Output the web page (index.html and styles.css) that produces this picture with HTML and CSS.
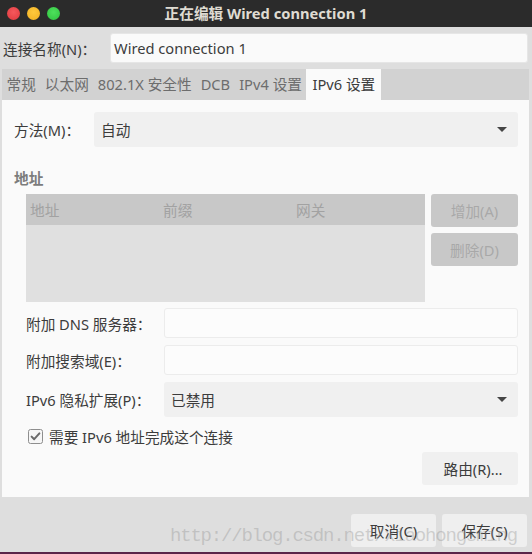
FILE: index.html
```html
<!DOCTYPE html>
<html lang="zh-CN">
<head>
<meta charset="utf-8">
<title>正在编辑 Wired connection 1</title>
<link rel="stylesheet" href="styles.css">
</head>
<body>
<div class="window">
  <div class="titlebar">
    <div class="lights">
      <span class="light red"></span>
      <span class="light yellow"></span>
      <span class="light green"></span>
    </div>
    <div class="title">正在编辑 Wired connection 1</div>
    <div></div>
  </div>

  <div class="name-row">
    <div class="name-label">连接名称(N)：</div>
    <div class="entry name-entry">Wired connection 1</div>
  </div>

  <div class="notebook">
    <div class="tabs">
      <div class="tab">常规</div>
      <div class="tab">以太网</div>
      <div class="tab">802.1X 安全性</div>
      <div class="tab">DCB</div>
      <div class="tab">IPv4 设置</div>
      <div class="tab active">IPv6 设置</div>
    </div>
    <div class="panel">
      <div class="method-row">
        <div class="method-label">方法(M)：</div>
        <div class="combo">
          <span>自动</span>
          <svg class="arrow" width="10" height="5" viewBox="0 0 10 5"><polygon points="0,0 10,0 5,5" fill="#454545"/></svg>
        </div>
      </div>

      <div class="section-title">地址</div>

      <div class="address">
        <div class="table">
          <div class="thead">
            <span>地址</span><span>前缀</span><span>网关</span>
          </div>
          <div class="tbody"></div>
        </div>
        <div class="side-buttons">
          <div class="btn disabled">增加(A)</div>
          <div class="btn disabled">删除(D)</div>
        </div>
      </div>

      <div class="form">
        <div class="form-label">附加 DNS 服务器：</div>
        <div class="entry field"></div>
        <div class="form-label">附加搜索域(E)：</div>
        <div class="entry field"></div>
        <div class="form-label">IPv6 隐私扩展(P)：</div>
        <div class="combo combo-small">
          <span>已禁用</span>
          <svg class="arrow" width="10" height="5" viewBox="0 0 10 5"><polygon points="0,0 10,0 5,5" fill="#454545"/></svg>
        </div>
      </div>

      <div class="check-row">
        <svg class="checkbox" width="15" height="15" viewBox="0 0 15 15">
          <rect x="0.5" y="0.5" width="14" height="14" rx="2" ry="2" fill="#f6f6f6" stroke="#8e8e8e"/>
          <path d="M3.6 7.6 L6.2 10.2 L11.4 4.4" fill="none" stroke="#6a6a6a" stroke-width="2" stroke-linecap="round" stroke-linejoin="round"/>
        </svg>
        <span>需要 IPv6 地址完成这个连接</span>
      </div>

      <div class="route-row">
        <div class="btn route">路由(R)...</div>
      </div>
    </div>
  </div>

  <div class="dialog-buttons">
    <div class="btn action">取消(C)</div>
    <div class="btn action">保存(S)</div>
  </div>
  <div class="bottom-line"></div>

  <div class="watermark">http://blog.csdn.net/xiaohongsming</div>
</div>
</body>
</html>
```

FILE: styles.css
```css
html, body {
  margin: 0;
  padding: 0;
}

body {
  width: 532px;
  height: 554px;
  overflow: hidden;
  background: #dedede;
  font-family: "Noto Sans", "Noto Sans CJK SC", sans-serif;
  font-size: 14.67px;
  color: #3c3c3c;
}

.window {
  position: relative;
  width: 532px;
  height: 554px;
  display: flex;
  flex-direction: column;
}

.titlebar {
  height: 27px;
  flex: none;
  background: #2b2b2b;
  display: grid;
  grid-template-columns: 1fr auto 1fr;
  align-items: center;
}

.lights {
  display: flex;
  gap: 7px;
  padding-left: 7px;
}

.light {
  width: 13px;
  height: 13px;
  border-radius: 50%;
  display: block;
}

.red { background: radial-gradient(circle at 50% 40%, #f5585c, #e0393e); }
.yellow { background: radial-gradient(circle at 50% 40%, #ffc93c, #f2b022); }
.green { background: radial-gradient(circle at 50% 40%, #4ee05c, #2fc43f); }

.title {
  color: #dfdbd2;
  font-weight: bold;
  font-size: 14.67px;
  line-height: 27px;
}

.name-row {
  display: flex;
  align-items: center;
  margin: 6px 4px 0 3px;
  height: 30px;
  flex: none;
}

.name-label {
  width: 107px;
  flex: none;
}

.entry {
  background: #fafafa;
  border-radius: 3px;
  box-sizing: border-box;
}

.name-entry {
  flex: 1;
  height: 30px;
  padding-left: 3px;
  border: 1px solid #e6e6e6;
  line-height: 28px;
}

.notebook {
  margin: 6px 3px 0 2px;
  flex: none;
}

.tabs {
  height: 31px;
  background: #d2d2d2;
  display: flex;
}

.tab {
  padding: 0 4.5px;
  line-height: 31px;
  color: #6d6d6d;
  white-space: nowrap;
}

.tab.active {
  background: #fafafa;
  color: #3c3c3c;
  padding: 0 6px;
}

.panel {
  background: #fafafa;
  height: 397px;
  box-sizing: border-box;
  padding: 12px 11px 0 12px;
}

.method-row {
  display: flex;
  align-items: center;
  height: 35px;
}

.method-label {
  width: 80px;
  flex: none;
}

.combo {
  flex: 1;
  height: 35px;
  background: #f0f0f0;
  border-radius: 3px;
  display: flex;
  align-items: center;
  justify-content: space-between;
  padding: 0 11px 0 7px;
  box-sizing: border-box;
}

.arrow {
  display: block;
}

.section-title {
  margin-top: 21px;
  line-height: 20px;
  font-weight: bold;
  color: #7c7c7c;
}

.address {
  margin-top: 6px;
  margin-left: 12px;
  display: flex;
  gap: 6px;
}

.table {
  width: 399px;
  height: 108px;
  background: #e0e0e0;
  display: flex;
  flex-direction: column;
}

.thead {
  height: 31px;
  background: #c8c8c8;
  display: grid;
  grid-template-columns: 133px 133px 1fr;
  align-items: center;
  color: #a2a2a2;
}

.thead span {
  padding-left: 4px;
}

.tbody {
  flex: 1;
}

.side-buttons {
  flex: 1;
  display: flex;
  flex-direction: column;
  gap: 6px;
}

.btn {
  height: 33px;
  border-radius: 3px;
  display: flex;
  align-items: center;
  justify-content: center;
  box-sizing: border-box;
  white-space: nowrap;
}

.btn.disabled {
  background: #c8c8c8;
  color: #a8a8a8;
}

.form {
  margin-top: 6px;
  margin-left: 12px;
  display: grid;
  grid-template-columns: 138px 1fr;
  row-gap: 7px;
  align-items: center;
}

.form-label {
  white-space: nowrap;
}

.field {
  height: 30px;
  border: 1px solid #ececec;
  background: #fcfcfc;
}

.combo-small {
  height: 35px;
}

.check-row {
  margin-top: 9px;
  margin-left: 14px;
  display: flex;
  align-items: center;
  gap: 6px;
  height: 20px;
}

.checkbox {
  display: block;
  flex: none;
}

.route-row {
  margin-top: 6px;
  display: flex;
  justify-content: flex-end;
}

.btn.route {
  width: 96px;
  background: #f0f0f0;
  padding-left: 6px;
}

.dialog-buttons {
  margin-top: 17px;
  display: flex;
  justify-content: flex-end;
  gap: 6px;
  padding-right: 5px;
  flex: none;
}

.btn.action {
  width: 85px;
  background: #efefef;
}

.bottom-line {
  margin-top: 5px;
  height: 2px;
  flex: none;
  background: #5b2449;
}

.watermark {
  position: absolute;
  left: 170px;
  top: 526px;
  font-family: "Liberation Mono", monospace;
  font-size: 19px;
  line-height: 20px;
  letter-spacing: -1.2px;
  color: rgba(140, 140, 140, 0.35);
  white-space: nowrap;
  pointer-events: none;
}
```
